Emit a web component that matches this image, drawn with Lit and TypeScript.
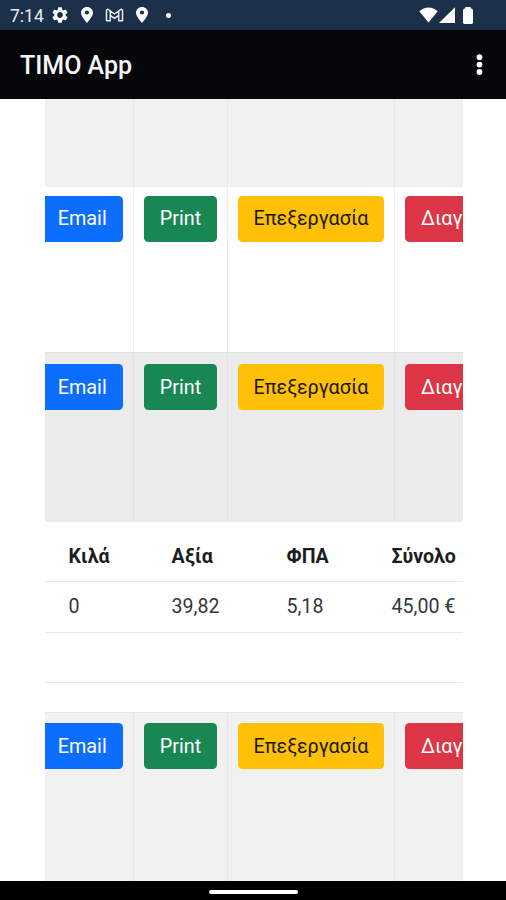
import { LitElement, html, css, svg } from "lit";
import { customElement, property } from "lit/decorators.js";

@customElement("status-bar")
class StatusBar extends LitElement {
  static styles = css`
    :host { display: flex; flex: none; align-items: center; height: 30px; background: #1c304a; color: #e6ebf0; padding-left: 10px; box-sizing: border-box; }
    .time { font: 400 17.5px/28px Roboto, sans-serif; width: 41px; padding-top: 2px; height: 30px; box-sizing: border-box; white-space: nowrap; }
    svg { display: block; fill: #fff; flex: none; }
    .gear { margin-left: 1px; }
    .pin { margin-left: 13px; }
    .mail { margin-left: 12px; }
    .pin2 { margin-left: 12px; }
    .dot { width: 5px; height: 5px; border-radius: 50%; background: #fff; margin-left: 18px; }
    .wifi { margin-left: auto; }
    .signal { margin-left: 1px; }
    .battery { margin: 0 33.5px 0 8px; }
  `;
  pin(cls: string) {
    return html`<svg class=${cls} width="12" height="16" viewBox="5 2 14 20" preserveAspectRatio="none">
      <path fill-rule="evenodd" d="M12 2C8.1 2 5 5.1 5 9c0 5.2 7 13 7 13s7-7.800 7-13c0-3.900-3.100-7-7-7zm0 9.500a2.500 2.500 0 1 1 0-5 2.500 2.500 0 0 1 0 5z"/></svg>`;
  }
  render() {
    return html`
      <span class="time">7:14</span>
      <svg class="gear" width="16" height="16" viewBox="2 2 20 20"><path d="M19.140 12.940c.04-.3.060-.61.060-.94 0-.32-.02-.64-.07-.94l2.030-1.580a.49.49 0 0 0 .12-.61l-1.920-3.320a.488.488 0 0 0-.59-.22l-2.390.96c-.5-.38-1.030-.7-1.620-.94l-.36-2.540a.484.484 0 0 0-.48-.41h-3.840c-.24 0-.43.17-.47.41l-.36 2.540c-.59.24-1.130.57-1.620.94l-2.390-.96c-.22-.08-.47 0-.59.22L2.740 8.870c-.12.21-.08.47.12.61l2.030 1.580c-.05.3-.09.63-.09.94s.02.64.07.94l-2.030 1.580a.49.49 0 0 0-.12.61l1.920 3.320c.12.22.37.29.59.22l2.390-.96c.5.38 1.030.7 1.620.94l.36 2.540c.05.24.24.41.48.41h3.840c.24 0 .44-.17.47-.41l.36-2.540c.59-.24 1.130-.56 1.620-.94l2.390.96c.22.08.47 0 .59-.22l1.920-3.320c.12-.22.07-.47-.12-.61l-2.010-1.580zM12 15.600A3.610 3.610 0 0 1 8.400 12c0-1.980 1.620-3.600 3.600-3.600s3.600 1.620 3.600 3.600-1.620 3.600-3.600 3.600z"/></svg>
      ${this.pin("pin")}
      <svg class="mail" width="19" height="14" viewBox="0 0 19 14"><path d="M1.500 12.800V2.700Q1.500 1 3.100 1.400L9.500 6 15.900 1.400Q17.500 1 17.500 2.700V12.800H13.700V7.400L9.500 10.400 5.300 7.400V12.800ZM5.300 7.400V3.200M13.700 7.400V3.200" fill="none" stroke="#e9edf2" stroke-width="1.500" stroke-linejoin="round"/></svg>
      ${this.pin("pin2")}
      <i class="dot"></i>
      <svg class="wifi" width="19" height="16" viewBox="0 0 19 16"><path d="M9.500 15.500L.3 4.200Q4.300.4 9.500.4T18.700 4.200Z"/></svg>
      <svg class="signal" width="16" height="16" viewBox="0 0 16 16"><path d="M0 16L16 .2V16Z"/></svg>
      <svg class="battery" width="10" height="17" viewBox="0 0 10 17"><path d="M2.600 0H7.400L8 1.600Q10 1.800 10 3.600V15.600Q10 17 8.600 17H1.400Q0 17 0 15.600V3.600Q0 1.800 2 1.600Z"/></svg>
    `;
  }
}

@customElement("title-bar")
class TitleBar extends LitElement {
  static styles = css`
    :host { display: flex; flex: none; align-items: center; justify-content: space-between; height: 69px; box-sizing: border-box; background: #050708; padding: 0 23px 0 20px; }
    .title { font: 500 25px/30px Roboto, sans-serif; color: #f6f6f6; padding-top: 3px; white-space: nowrap; }
    svg { fill: #fff; display: block; }
  `;
  render() {
    return html`<span class="title">TIMO App</span>
      <svg width="7" height="22" viewBox="0 0 7 22">${[3.2, 10.6, 18].map((y) => svg`<circle cx="3.500" cy=${y} r="2.900"/>`)}</svg>`;
  }
}

@customElement("action-row")
class ActionRow extends LitElement {
  @property({ type: Boolean }) empty = false;
  static styles = css`
    :host { display: grid; flex: none; grid-template-columns: 89px 94px 167px 68px; box-sizing: border-box; border-top: 1px solid var(--line, #e4e6e8); }
    .cell { box-sizing: border-box; border-right: 1px solid var(--line, #e4e6e8); padding: var(--pad, 9px) 0 0 10px; }
    .cell:first-child { padding-left: 0; }
    .cell:last-child { border-right: 0; }
    .btn { display: flex; align-items: center; justify-content: center; height: 46px; box-sizing: border-box; border-radius: 4.5px; font: 400 19.8px/30px Roboto, sans-serif; color: #fff; white-space: nowrap; padding-top: 1px; }
    .email { width: 77.5px; background: #0d6efd; border-radius: 0 4.5px 4.5px 0; padding-right: 3px; }
    .print { width: 73px; background: #198754; }
    .edit { width: 146px; background: #ffc107; color: #1c1700; }
    .delete { width: 58px; background: #dc3545; border-radius: 4.5px 0 0 4.5px; justify-content: flex-start; padding-left: 16px; }
  `;
  render() {
    const items = [["email", "Email"], ["print", "Print"], ["edit", "Επεξεργασία"], ["delete", "Διαγ"]];
    return items.map(([k, t]) => html`<div class="cell">${this.empty ? "" : html`<div class="btn ${k}">${t}</div>`}</div>`);
  }
}

@customElement("totals-table")
class TotalsTable extends LitElement {
  static styles = css`
    :host { display: block; flex: none; height: 190px; box-sizing: border-box; font: 400 19.6px/30px Roboto, sans-serif; color: #34373a; }
    .row { display: grid; grid-template-columns: 103px 115px 105px 1fr; padding-left: 23.5px; box-sizing: border-box; align-items: center; height: 51px; border-bottom: 1px solid #e6e9ea; white-space: nowrap; }
    .head { height: 60px; font-weight: 700; color: #1b1d20; padding-top: 10px; }
    .blank { height: 50px; }
  `;
  render() {
    return html`
      <div class="row head">${["Κιλά", "Αξία", "ΦΠΑ", "Σύνολο"].map((t) => html`<span>${t}</span>`)}</div>
      <div class="row">${["0", "39,82", "5,18", "45,00 €"].map((t) => html`<span>${t}</span>`)}</div>
      <div class="row blank"></div>`;
  }
}

@customElement("app-root")
class AppRoot extends LitElement {
  static styles = css`
    :host { display: flex; flex-direction: column; width: 506px; height: 900px; background: #fff; overflow: hidden; }
    .content { flex: 1; min-height: 0; margin: 0 43px 0 45px; overflow: hidden; display: flex; flex-direction: column; }
    .r1 { height: 87px; background: #f1f1f1; --line: #e7e8e9; border-top: 0; }
    .r2 { height: 166px; --line: #eceef0; --pad: 8.5px; }
    .r3 { height: 170px; background: #ebebeb; --line: #e1e2e3; --pad: 11px; }
    .r4 { height: 169px; background: #f1f1f1; --line: #e5e6e7; --pad: 10px; }
    .nav { flex: none; height: 19px; background: #000; display: flex; justify-content: center; align-items: center; }
    .handle { width: 89px; height: 4px; border-radius: 2px; background: #fff; margin-top: 2px; }
  `;
  render() {
    return html`
      <status-bar></status-bar>
      <title-bar></title-bar>
      <div class="content">
        <action-row class="r1" empty></action-row>
        <action-row class="r2"></action-row>
        <action-row class="r3"></action-row>
        <totals-table></totals-table>
        <action-row class="r4"></action-row>
      </div>
      <div class="nav"><div class="handle"></div></div>`;
  }
}
